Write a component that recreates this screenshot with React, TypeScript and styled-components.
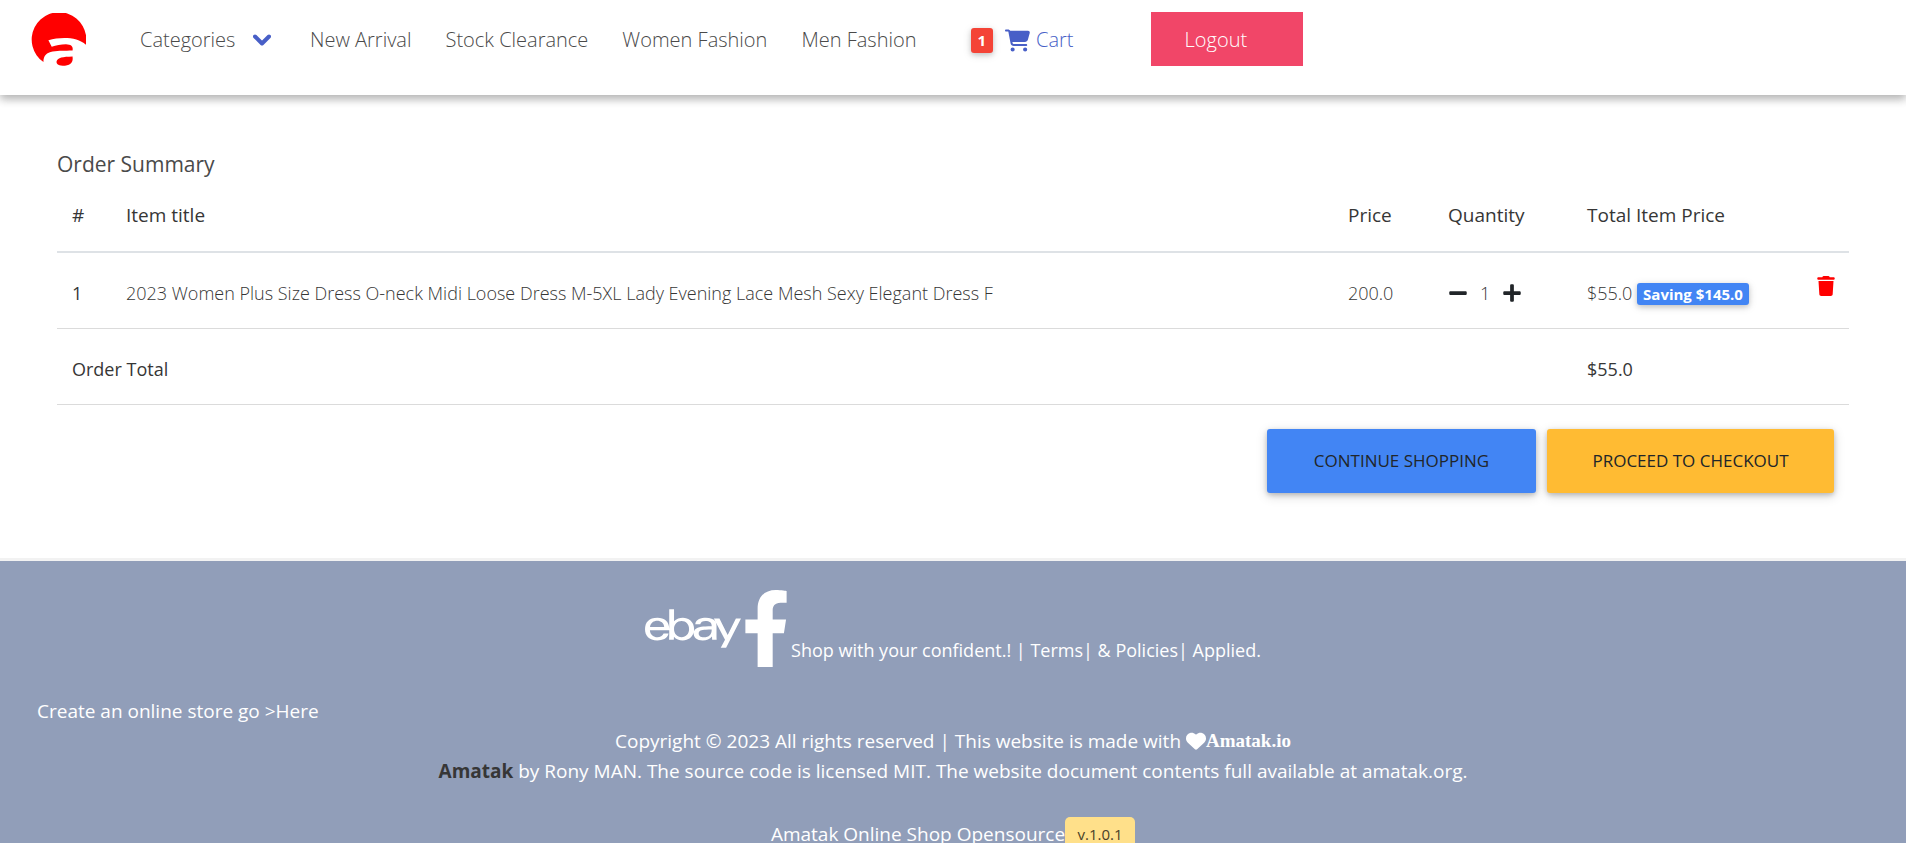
import React from "react";
import styled, { createGlobalStyle } from "styled-components";
import { FaEbay, FaFacebookF, FaMinus, FaPlus } from "react-icons/fa";
import { FaCartShopping, FaHeart, FaTrash } from "react-icons/fa6";

const GlobalStyle = createGlobalStyle`
  *, *::before, *::after { box-sizing: border-box; }
  body {
    margin: 0;
    background: #fff;
    color: #363636;
    font-family: "Segoe UI", "Open Sans", "Noto Sans", sans-serif;
    font-size: 19px;
    line-height: 30px;
    overflow-x: hidden;
  }
  a { color: inherit; text-decoration: none; }
  button { font: inherit; color: inherit; cursor: pointer; }
`;

const raised = "0 2px 5px rgba(0, 0, 0, 0.16), 0 2px 10px rgba(0, 0, 0, 0.12)";

const Header = styled.header`
  display: flex;
  align-items: flex-start;
  height: 95px;
  padding: 12px 31px;
  box-shadow: 0 5px 8px rgba(0, 0, 0, 0.16), 0 2px 10px rgba(0, 0, 0, 0.2);
`;

const Brand = styled.a`
  display: block;
  width: 55px;
  margin-right: 37px;
  padding-top: 1px;
  svg { display: block; width: 55px; height: 53px; }
`;

const Nav = styled.nav`
  display: flex;
  align-items: stretch;
  height: 54px;
  font-size: 20px;
  font-weight: 300;
`;

const NavItem = styled.a`
  display: flex;
  align-items: center;
  padding: 2px 17px 0;
  color: #4a4a4a;
  white-space: nowrap;
`;

const MenuButton = styled.button`
  display: flex;
  align-items: center;
  justify-content: space-between;
  width: 170px;
  padding: 2px 22px 0 17px;
  border: 0;
  background: none;
  color: #4a4a4a;
  svg { color: #485fc7; }
`;

const CartLink = styled.a`
  display: flex;
  align-items: center;
  margin: 0 60px 0 20px;
  padding: 2px 17px 0;
  color: #485fc7;
  svg { margin: 0 6px 0 12px; }
`;

const Badge = styled.span<{ $color: string }>`
  display: inline-block;
  padding: 0 6px;
  border-radius: 3px;
  background: ${(p) => p.$color};
  color: #fff;
  font-size: 15px;
  line-height: 22px;
  font-weight: 700;
  box-shadow: ${raised};
`;

const CountBadge = styled(Badge)`
  padding: 0 7px;
  line-height: 25px;
`;

const LogoutButton = styled.button`
  width: 152px;
  padding: 2px 34px 0;
  border: 0;
  background: #f14668;
  color: #fff;
  font-weight: 300;
  text-align: left;
`;

const Main = styled.main`
  padding: 53px 57px 65px;
`;

const Title = styled.h1`
  margin: 0 0 16px;
  font-size: 21px;
  line-height: 32px;
  font-weight: 400;
  color: #4a4a4a;
`;

const Table = styled.table`
  width: 100%;
  border-collapse: collapse;
  table-layout: fixed;
  th, td { padding: 0 15px; text-align: left; font-weight: 400; white-space: nowrap; }
  thead th { height: 56px; padding-bottom: 17px; border-bottom: 2px solid #dee2e6; }
  tbody th, tbody td { height: 76px; padding-top: 6px; border-bottom: 1px solid #dbdbdb; }
  tbody th { font-size: 18px; }
  tbody td { font-size: 18px; font-weight: 300; }
`;

const Total = styled.span`
  font-weight: 400;
`;

const Stepper = styled.div`
  display: flex;
  align-items: center;
  gap: 12px;
`;

const IconButton = styled.button<{ $color?: string }>`
  display: block;
  padding: 0;
  border: 0;
  background: none;
  color: ${(p) => p.$color ?? "#212529"};
  svg { display: block; }
`;

const RemoveCell = styled.td`
  &&& { padding-top: 0; padding-bottom: 9px; }
`;

const Actions = styled.div`
  display: flex;
  justify-content: flex-end;
  gap: 11px;
  padding: 24px 15px 0;
`;

const ActionButton = styled.button<{ $color: string; $width: number }>`
  width: ${(p) => p.$width}px;
  height: 64px;
  border: 0;
  border-radius: 3px;
  background: ${(p) => p.$color};
  color: #212529;
  font-size: 17px;
  font-weight: 400;
  text-transform: uppercase;
  box-shadow: 0 2px 5px rgba(0, 0, 0, 0.2), 0 3px 12px rgba(0, 0, 0, 0.16);
`;

const Footer = styled.footer`
  border-top: 3px solid #f2f2f2;
  padding: 29px 37px 30px;
  background: #919eb9;
  color: #fff;
  text-align: center;
`;

const Social = styled.div`
  display: flex;
  align-items: flex-end;
  justify-content: center;
  font-size: 18px;
  svg { display: block; height: 77px; }
  p { margin: 0 0 2px; }
`;

const EbayIcon = styled(FaEbay)`
  width: 96px;
`;

const FacebookIcon = styled(FaFacebookF)`
  width: 50px;
`;

const StoreLine = styled.p`
  margin: 29px 0 0;
  text-align: left;
`;

const FooterLine = styled.p<{ $gap?: number }>`
  display: flex;
  justify-content: center;
  align-items: center;
  margin: ${(p) => p.$gap ?? 0}px 0 0;
  white-space: pre;
`;

const Strong = styled.strong`
  color: #363636;
  font-weight: 700;
`;

const Maker = styled.a`
  font-family: "Liberation Serif", serif;
  font-weight: 700;
`;

const Version = styled.span`
  width: 70px;
  border-radius: 5px;
  background: #ffe08a;
  color: #4a4228;
  font-size: 15px;
  line-height: 34px;
`;

const Logo = () => (
  <svg viewBox="0 0 165 160" fill="#f00" aria-hidden="true">
    <path d="M165 96A82.500 82.500 0 1 0 37 148C37 128 47 119 65 116C85 113 100 114 125 113C127 100 122 95 105 94C90 94 75 97 62 102L52 82C90 72 140 72 165 96Z" />
    <path d="M125 131C128 152 115 159 95 159C80 159 75 152 77 145C80 134 95 132 125 131Z" />
  </svg>
);

const Chevron = () => (
  <svg width="18" height="12" viewBox="0 0 18 12" fill="none" stroke="currentColor" strokeWidth="4" strokeLinecap="round" strokeLinejoin="round" aria-hidden="true">
    <path d="M2 2.500L9 9.500L16 2.500" />
  </svg>
);

const links = ["New Arrival", "Stock Clearance", "Women Fashion", "Men Fashion"];

export default function App() {
  return (
    <>
      <GlobalStyle />
      <Header>
        <Brand href="#" aria-label="Amatak home"><Logo /></Brand>
        <Nav>
          <MenuButton type="button">Categories <Chevron /></MenuButton>
          {links.map((label) => <NavItem href="#" key={label}>{label}</NavItem>)}
          <CartLink href="#">
            <CountBadge $color="#f44336">1</CountBadge>
            <FaCartShopping size={25} />
            Cart
          </CartLink>
          <LogoutButton type="button">Logout</LogoutButton>
        </Nav>
      </Header>
      <Main>
        <Title>Order Summary</Title>
        <Table>
          <colgroup>
            <col style={{ width: 54 }} />
            <col />
            <col style={{ width: 100 }} />
            <col style={{ width: 139 }} />
            <col style={{ width: 229 }} />
            <col style={{ width: 48 }} />
          </colgroup>
          <thead>
            <tr>
              <th scope="col">#</th>
              <th scope="col">Item title</th>
              <th scope="col">Price</th>
              <th scope="col">Quantity</th>
              <th scope="col" colSpan={2}>Total Item Price</th>
            </tr>
          </thead>
          <tbody>
            <tr>
              <th scope="row">1</th>
              <td>2023 Women Plus Size Dress O-neck Midi Loose Dress M-5XL Lady Evening Lace Mesh Sexy Elegant Dress F</td>
              <td>200.0</td>
              <td>
                <Stepper>
                  <IconButton type="button" aria-label="Decrease quantity"><FaMinus size={20} /></IconButton>
                  1
                  <IconButton type="button" aria-label="Increase quantity"><FaPlus size={20} /></IconButton>
                </Stepper>
              </td>
              <td>$55.0 <Badge $color="#4285f4">Saving $145.0</Badge></td>
              <RemoveCell>
                <IconButton type="button" aria-label="Remove item" $color="#f00"><FaTrash size={20} /></IconButton>
              </RemoveCell>
            </tr>
            <tr>
              <th scope="row" colSpan={4}>Order Total</th>
              <td colSpan={2}><Total>$55.0</Total></td>
            </tr>
          </tbody>
        </Table>
        <Actions>
          <ActionButton type="button" $color="#4285f4" $width={269}>Continue shopping</ActionButton>
          <ActionButton type="button" $color="#ffbb33" $width={287}>Proceed to checkout</ActionButton>
        </Actions>
      </Main>
      <Footer>
        <Social>
          <a href="#" aria-label="eBay"><EbayIcon /></a>
          <a href="#" aria-label="Facebook"><FacebookIcon /></a>
          <p>Shop with your confident.! | <a href="#">Terms</a>| &amp; <a href="#">Policies</a>| Applied.</p>
        </Social>
        <StoreLine>Create an online store go &gt;<a href="#">Here</a></StoreLine>
        <FooterLine>Copyright © 2023 All rights reserved | This website is made with <FaHeart size={20} /><Maker href="#">Amatak.io</Maker></FooterLine>
        <FooterLine><Strong>Amatak</Strong> by Rony MAN. The source code is licensed <a href="#">MIT</a>. The website document contents full available at <a href="#">amatak.org</a>.</FooterLine>
        <FooterLine $gap={31}>Amatak Online Shop Opensource<Version>v.1.0.1</Version></FooterLine>
      </Footer>
    </>
  );
}
